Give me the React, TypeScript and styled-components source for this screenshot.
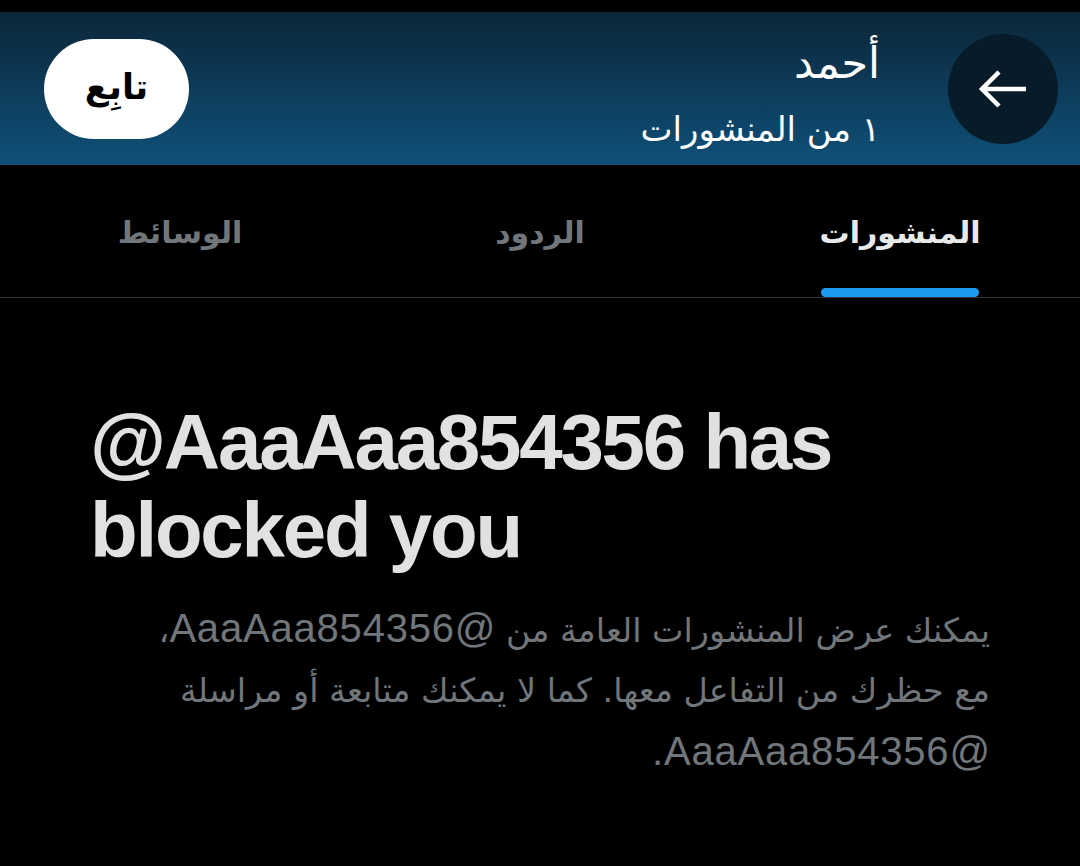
import React from "react";
import styled, { createGlobalStyle } from "styled-components";

const GlobalStyle = createGlobalStyle`
  html, body {
    margin: 0;
    padding: 0;
    background: #000;
  }
  body {
    font-family: "Liberation Sans", "DejaVu Sans", sans-serif;
  }
  * { box-sizing: border-box; }
`;

const Page = styled.div`
  width: 1080px;
  min-height: 866px;
  background: #000;
  padding-top: 12px;
  display: flex;
  flex-direction: column;
`;

const Header = styled.header`
  height: 153px;
  background: linear-gradient(180deg, #0b2638 0%, #0d3b59 50%, #0f5078 100%);
  display: flex;
  align-items: center;
  padding: 0 22px 0 44px;
`;

const FollowButton = styled.button`
  width: 145px;
  height: 100px;
  border-radius: 50px;
  border: none;
  background: #fff;
  color: #000;
  font-family: "DejaVu Sans", sans-serif;
  font-weight: 700;
  font-size: 35px;
  direction: rtl;
  display: flex;
  align-items: center;
  justify-content: center;
  padding: 0 0 4px;
`;

const TitleBlock = styled.div`
  margin-left: auto;
  margin-right: 68px;
  padding-top: 14px;
  direction: rtl;
  text-align: right;
  color: #fff;
  display: flex;
  flex-direction: column;
  gap: 10px;
  font-family: "DejaVu Sans", sans-serif;
`;

const Title = styled.div`
  font-size: 43px;
  line-height: 56px;
`;

const Subtitle = styled.div`
  font-size: 34px;
  line-height: 56px;
`;

const BackButton = styled.button`
  width: 110px;
  height: 110px;
  border-radius: 50%;
  border: none;
  background: #071b29;
  display: flex;
  align-items: center;
  justify-content: center;
  padding: 0;
`;

const Tabs = styled.nav`
  display: grid;
  grid-template-columns: repeat(3, 1fr);
  direction: rtl;
  height: 133px;
  border-bottom: 1px solid #2f3336;
`;

const Tab = styled.div<{ $active?: boolean }>`
  display: flex;
  flex-direction: column;
  align-items: center;
  justify-content: flex-end;
  color: ${(p) => (p.$active ? "#e7e9ea" : "#71767b")};
  font-family: "DejaVu Sans", sans-serif;
  font-weight: 700;
  font-size: 30px;
`;

const TabLabel = styled.span`
  line-height: 44px;
  margin-bottom: 33px;
`;

const Indicator = styled.div<{ $active?: boolean }>`
  width: 158px;
  height: 9px;
  border-radius: 5px;
  background: ${(p) => (p.$active ? "#1d9bf0" : "transparent")};
`;

const Content = styled.main`
  padding: 100px 90px 0;
`;

const Heading = styled.h1`
  margin: 0;
  font-family: "Liberation Sans", sans-serif;
  font-weight: 700;
  font-size: 78px;
  line-height: 88px;
  letter-spacing: -2.2px;
  color: #e0e1e2;
`;

const Body = styled.p`
  margin: 24px 0 0;
  direction: rtl;
  text-align: right;
  font-family: "DejaVu Sans", sans-serif;
  font-size: 33.4px;
  line-height: 60px;
  color: #71767b;
  white-space: nowrap;
`;

const Handle = styled.span`
  font-family: "Liberation Sans", sans-serif;
  font-size: 40px;
  letter-spacing: 0.8px;
`;

const BackArrow = () => (
  <svg width="50" height="40" viewBox="0 0 50 40" fill="none">
    <path d="M3 20 H48" stroke="#fff" strokeWidth="4.5" />
    <path d="M21 3 L4 20 L21 37" stroke="#fff" strokeWidth="4.5" strokeLinejoin="miter" />
  </svg>
);

const tabs = [
  { label: "المنشورات", active: true },
  { label: "الردود", active: false },
  { label: "الوسائط", active: false },
];

export default function App() {
  return (
    <>
      <GlobalStyle />
      <Page>
        <Header>
          <FollowButton>تابِع</FollowButton>
          <TitleBlock>
            <Title>أحمد</Title>
            <Subtitle>١ من المنشورات</Subtitle>
          </TitleBlock>
          <BackButton aria-label="رجوع">
            <BackArrow />
          </BackButton>
        </Header>
        <Tabs>
          {tabs.map((t) => (
            <Tab key={t.label} $active={t.active}>
              <TabLabel>{t.label}</TabLabel>
              <Indicator $active={t.active} />
            </Tab>
          ))}
        </Tabs>
        <Content>
          <Heading>@AaaAaa854356 has blocked you</Heading>
          <Body>
            يمكنك عرض المنشورات العامة من <Handle>@AaaAaa854356</Handle>،
            <br />
            مع حظرك من التفاعل معها. كما لا يمكنك متابعة أو مراسلة
            <br />
            <Handle>@AaaAaa854356.</Handle>
          </Body>
        </Content>
      </Page>
    </>
  );
}
